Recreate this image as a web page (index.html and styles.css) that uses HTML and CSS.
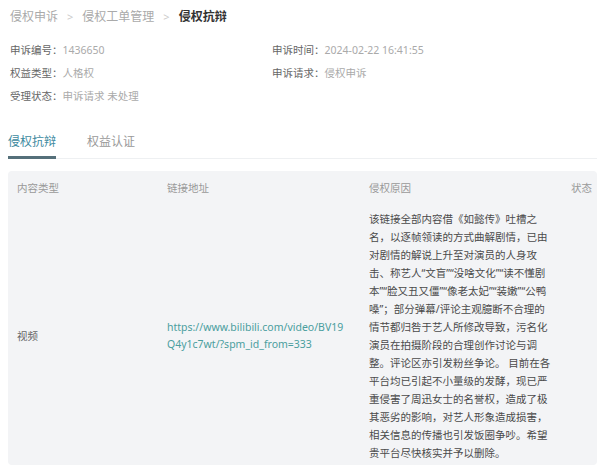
FILE: index.html
```html
<!DOCTYPE html>
<html lang="zh-CN">
<head>
    <meta charset="UTF-8">
    <meta name="viewport" content="width=device-width, initial-scale=1.0">
    <title>侵权抗辩</title>
    <link rel="stylesheet" href="styles.css">
</head>
<body>

    <div class="pagina">
        <div class="migas">
            <span>侵权申诉</span>
            <span class="sep">&gt;</span>
            <span>侵权工单管理</span>
            <span class="sep">&gt;</span>
            <span class="actual">侵权抗辩</span>
        </div>

        <div class="datos">
            <div class="fila"><span class="etiqueta">申诉编号：</span><span class="valor">1436650</span></div>
            <div class="fila"><span class="etiqueta">申诉时间：</span><span class="valor">2024-02-22 16:41:55</span></div>
            <div class="fila"><span class="etiqueta">权益类型：</span><span class="valor">人格权</span></div>
            <div class="fila"><span class="etiqueta">申诉请求：</span><span class="valor">侵权申诉</span></div>
            <div class="fila"><span class="etiqueta">受理状态：</span><span class="valor">申诉请求 未处理</span></div>
        </div>

        <div class="pestanas">
            <div class="pestana activa">侵权抗辩</div>
            <div class="pestana">权益认证</div>
        </div>

        <div class="tabla">
            <div class="cab">内容类型</div>
            <div class="cab">链接地址</div>
            <div class="cab">侵权原因</div>
            <div class="cab estado">状态</div>

            <div class="celda tipo">视频</div>
            <div class="celda enlace">https://www.bilibili.com/video/BV19Q4y1c7wt/?spm_id_from=333</div>
            <div class="celda motivo">该链接全部内容借《如懿传》吐槽之名，以逐帧领读的方式曲解剧情，已由对剧情的解说上升至对演员的人身攻击、称艺人“文盲”“没啥文化”“读不懂剧本”“脸又丑又僵”“像老太妃”“装嫩”“公鸭嗓”；部分弹幕/评论主观臆断不合理的情节都归咎于艺人所修改导致，污名化演员在拍摄阶段的合理创作讨论与调整。评论区亦引发粉丝争论。 目前在各平台均已引起不小量级的发酵，现已严重侵害了周迅女士的名誉权，造成了极其恶劣的影响，对艺人形象造成损害，相关信息的传播也引发饭圈争吵。希望贵平台尽快核实并予以删除。</div>
            <div class="celda estado"></div>
        </div>
    </div>

</body>
</html>
```

FILE: styles.css
```css
body {
    margin: 0;
    background: #fff;
    font-family: "Noto Sans", "Noto Sans CJK SC", sans-serif;
    color: #555;
}

.pagina {
    padding: 8px 3px 0 8px;
}

/* migas de pan */
.migas {
    display: flex;
    align-items: center;
    gap: 9px;
    padding-left: 2px;
    font-size: 12px;
    line-height: 18px;
    color: #aaa;
}

.migas .sep {
    font-size: 11px;
    color: #ccc;
}

.migas .actual {
    color: #333;
    font-weight: bold;
}

/* datos del ticket */
.datos {
    display: grid;
    grid-template-columns: 262px 1fr;
    grid-auto-rows: 23px;
    margin-top: 12px;
    padding-left: 2px;
    font-size: 10.5px;
    align-items: center;
}

.datos .fila {
    white-space: nowrap;
}

.datos .etiqueta {
    color: #666;
}

.datos .valor {
    color: #aaa;
}

/* pestañas */
.pestanas {
    display: flex;
    gap: 31px;
    margin-top: 26px;
    border-bottom: 1px solid #eef0f2;
}

.pestana {
    font-size: 12px;
    line-height: 18px;
    padding-bottom: 5px;
    color: #999;
    border-bottom: 3px solid transparent;
    margin-bottom: -1px;
}

.pestana.activa {
    color: #3d8aa0;
    border-bottom-color: #55707a;
}

/* tabla */
.tabla {
    display: grid;
    grid-template-columns: 150px 202px 202px 1fr;
    margin-top: 12px;
    background: #f3f4f6;
    border-radius: 4px;
    font-size: 10.5px;
}

.cab {
    padding: 9px 9px 3px;
    line-height: 16px;
    color: #999;
}

.celda {
    padding: 11px 9px 3px;
    align-self: center;
    line-height: 18px;
}

.estado {
    padding-right: 0;
    white-space: nowrap;
}

.tipo {
    color: #666;
}

.enlace {
    color: #4a9e9e;
    word-break: break-all;
    padding-right: 12px;
    line-height: 17px;
}

.motivo {
    color: #4a4a4a;
    padding-right: 11px;
}
```
